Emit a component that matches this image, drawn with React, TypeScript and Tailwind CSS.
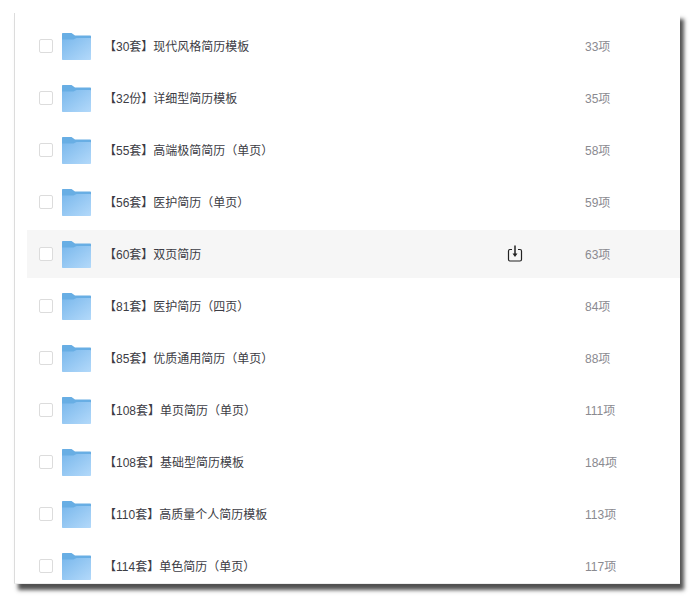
import React from 'react';

const files = [
  { name: '【30套】现代风格简历模板', count: '33项' },
  { name: '【32份】详细型简历模板', count: '35项' },
  { name: '【55套】高端极简简历（单页）', count: '58项' },
  { name: '【56套】医护简历（单页）', count: '59项' },
  { name: '【60套】双页简历', count: '63项', active: true },
  { name: '【81套】医护简历（四页）', count: '84项' },
  { name: '【85套】优质通用简历（单页）', count: '88项' },
  { name: '【108套】单页简历（单页）', count: '111项' },
  { name: '【108套】基础型简历模板', count: '184项' },
  { name: '【110套】高质量个人简历模板', count: '113项' },
  { name: '【114套】单色简历（单页）', count: '117项' },
];

const FolderIcon = () => (
  <svg width="29" height="27" viewBox="0 0 29 27" className="shrink-0">
    <defs>
      <linearGradient id="folderFront" x1="0" y1="0" x2="1" y2="1">
        <stop offset="0" stopColor="#7ab8ec" />
        <stop offset="1" stopColor="#b3d9fa" />
      </linearGradient>
    </defs>
    <path d="M0 1C0 .4.4 0 1 0h8.500l3.500 2.500h15c.6 0 1 .4 1 1V8H0z" fill="#68aee4" />
    <path d="M0 6.500h11.500L14.500 5H28c.6 0 1 .4 1 1v20c0 .6-.4 1-1 1H1c-.6 0-1-.4-1-1z" fill="url(#folderFront)" />
  </svg>
);

const DownloadIcon = () => (
  <svg width="16" height="18" viewBox="0 0 16 18" fill="none" stroke="#222" strokeWidth="1.2">
    <path d="M5 4.500H3c-.8 0-1.500.7-1.500 1.500v8.500c0 .8.7 1.500 1.500 1.500h10c.8 0 1.500-.7 1.500-1.500V6c0-.8-.7-1.500-1.500-1.500h-2" />
    <path d="M8 .5v9" strokeWidth="1.5" />
    <path d="M5.500 8.500h5L8 12z" fill="#222" stroke="none" />
  </svg>
);

export default function App() {
  return (
    <div className="h-[600px] w-[694px] overflow-hidden bg-white pl-[14px] pt-[13px] font-['Liberation_Sans','Noto_Sans_CJK_SC',sans-serif]">
      <div className="h-[571px] w-[666px] overflow-hidden border-l border-l-[#dcdcdc] border-b border-b-[#eeeeee] bg-white pt-[7px] shadow-[4px_6px_4px_rgba(50,50,50,0.85)]">
        {files.map((file) => (
          <div key={file.name} className="ml-3 py-[2px]">
            <div className={`flex h-12 items-center ${file.active ? 'bg-[#f6f6f6]' : ''}`}>
              <span className="ml-3 h-[14px] w-[14px] shrink-0 rounded-[2px] border border-[#dcdcdc] bg-white" />
              <span className="ml-[9px] mt-[1px]">
                <FolderIcon />
              </span>
              <span className="ml-[13px] mt-[1px] w-[403px] shrink-0 text-[12px] text-[#3c3c44]">{file.name}</span>
              <span className="flex w-[77px] shrink-0 items-center">{file.active ? <DownloadIcon /> : null}</span>
              <span className="ml-[1px] mt-[1px] text-[12px] text-[#8a8a90]">{file.count}</span>
            </div>
          </div>
        ))}
      </div>
    </div>
  );
}
